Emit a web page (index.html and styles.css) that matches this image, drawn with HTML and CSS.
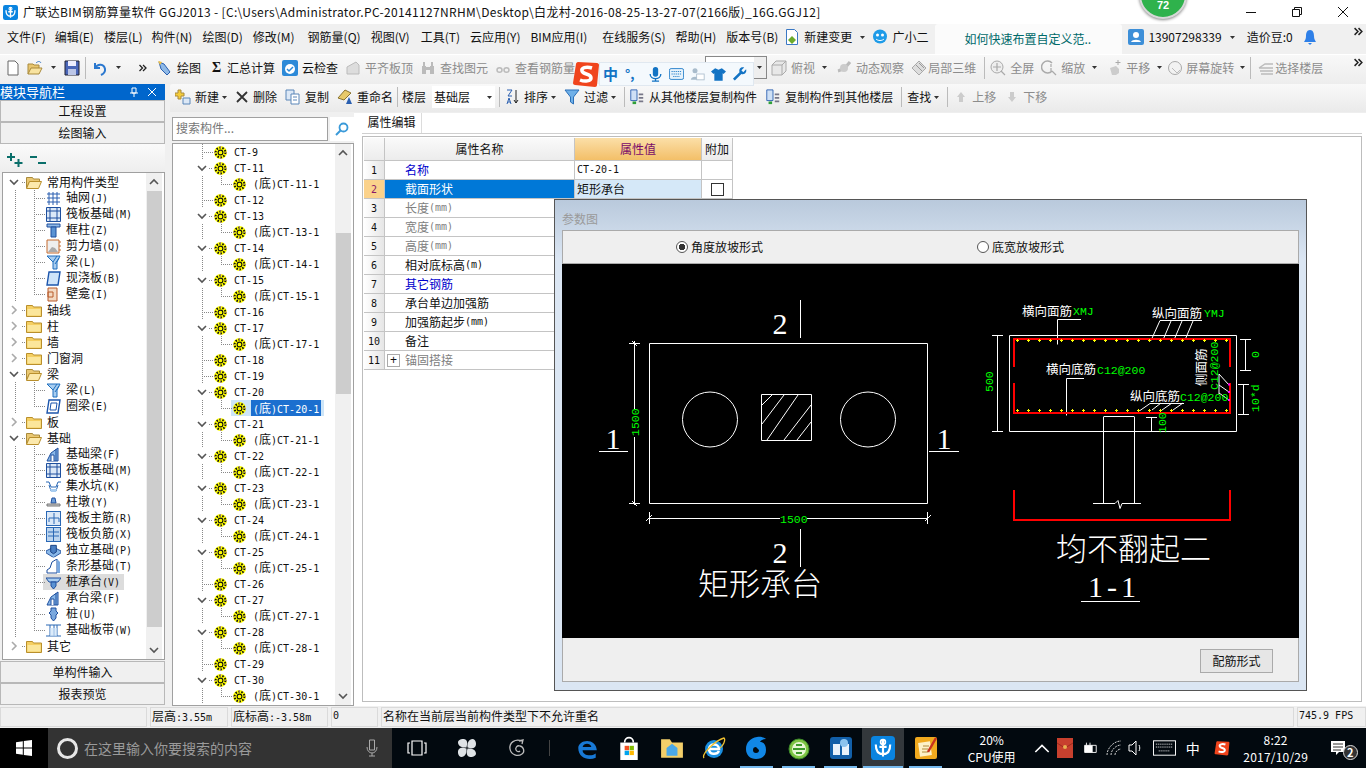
FILE: index.html
```html
<!DOCTYPE html>
<html lang="zh"><head><meta charset="utf-8"><title>广联达BIM钢筋算量软件</title><link rel="stylesheet" href="styles.css"></head>
<body>
<svg class="defs" xmlns="http://www.w3.org/2000/svg">
<symbol id="chevd" viewBox="0 0 10 10"><path d="M1 3l4 4 4-4" fill="none" stroke="#555" stroke-width="1.600"/></symbol>
<symbol id="chevu" viewBox="0 0 10 10"><path d="M1 7l4-4 4 4" fill="none" stroke="#555" stroke-width="1.600"/></symbol>
<symbol id="chevr" viewBox="0 0 10 10"><path d="M3 1l4 4-4 4" fill="none" stroke="#aaa" stroke-width="1.600"/></symbol>
<symbol id="folder" viewBox="0 0 16 14"><path d="M.5 2.500h6l1 1.500h8v9.500h-15z" fill="#f5cf62" stroke="#b98f2c"/><path d="M1.500 6h13v6.500h-13z" fill="#fbe69b"/></symbol>
<symbol id="fopen" viewBox="0 0 16 14"><path d="M.5 2.500h6l1 1.500h6v3h-10l-3 6z" fill="#eac873" stroke="#a98a3c"/><path d="M3.500 6.500h12l-3 7h-12z" fill="#fce9ad" stroke="#b98f2c"/></symbol>
<symbol id="ct" viewBox="0 0 12 12"><circle cx="6" cy="6" r="6" fill="#ff0"/><circle cx="6" cy="6" r="4.500" fill="none" stroke="#111" stroke-width="1.800" stroke-dasharray="1.400 1.400"/><circle cx="6" cy="6" r="2.200" fill="#ff0" stroke="#111"/><path d="M0 6h1.500M10.500 6H12M6 0v1.500M6 10.500V12" stroke="#a88" stroke-width="1"/></symbol>
<symbol id="grid" viewBox="0 0 15 15"><path d="M1 3h13M1 7h13M1 11h13M3 1v13M7 1v13M11 1v13" stroke="#2a5fb0" fill="none"/></symbol>
<symbol id="raft" viewBox="0 0 15 15"><path d="M.5.500h14v14H.5zM4 .500v14M11 .500v14M.5 4h14M.5 11h14" stroke="#1e4f9e" fill="#dbe8f7"/></symbol>
<symbol id="col" viewBox="0 0 15 15"><path d="M1 1h13v3H1z" fill="#8fb9e6" stroke="#1e4f9e"/><path d="M5 4h5v10H5z" fill="#5b93d3" stroke="#1e4f9e"/></symbol>
<symbol id="wall" viewBox="0 0 15 15"><path d="M1 1h12v13H1z" fill="#eee" stroke="#c46a2e"/><path d="M2 13l4-5 3 1 3 4z" fill="#aaa"/><path d="M13 3h2M13 7h2M13 11h2" stroke="#c46a2e"/></symbol>
<symbol id="beam" viewBox="0 0 15 15"><path d="M1 1h13l-3 6v7H7V7z" fill="#a8cdf0" stroke="#1e6fbe"/><path d="M7 7l4-6M9 9l4-6" stroke="#1e6fbe"/></symbol>
<symbol id="slab" viewBox="0 0 15 15"><path d="M3 1h11l-2 13H1z" fill="#cfe4f9" stroke="#1c55ac" stroke-width="1.400"/></symbol>
<symbol id="ring" viewBox="0 0 15 15"><path d="M3 1h11l-2 13H1z" fill="#fff" stroke="#1c55ac" stroke-width="1.400"/><path d="M5 4h6l-1 7H4z" fill="none" stroke="#1c55ac"/></symbol>
<symbol id="niche" viewBox="0 0 15 15"><path d="M2 1h9v13H2zM2 5h5v5H2z" fill="#f3d9c2" stroke="#b85a2a"/></symbol>
<symbol id="fbeam" viewBox="0 0 15 15"><path d="M1 14l4-8 7-5v13z" fill="#8ab8e8" stroke="#1e4f9e"/><path d="M5 14V8h3v6" fill="#fff" stroke="#1e4f9e"/><path d="M10 2v12" stroke="#1e4f9e"/></symbol>
<symbol id="sump" viewBox="0 0 15 15"><path d="M0 3h3l2 5h5l2-5h3M3 6l2 6h5l2-6" fill="none" stroke="#2a68b5"/><path d="M4 10h7l-1 3H5z" fill="#a8cdf0"/></symbol>
<symbol id="pier" viewBox="0 0 15 15"><path d="M6 3h3l1 5H5z" fill="#6f9fd8" stroke="#1e4f9e"/><path d="M1 9h13v2H1z" fill="#ccc" stroke="#777"/></symbol>
<symbol id="rmain" viewBox="0 0 15 15"><rect x=".5" y=".5" width="14" height="14" fill="#dbe8f7" stroke="#2a68b5"/><path d="M8 2v11M3 7h10M3 7v4M13 7v4" stroke="#2a68b5" fill="none"/></symbol>
<symbol id="rneg" viewBox="0 0 15 15"><rect x=".5" y=".5" width="14" height="14" fill="#bcd5ef" stroke="#2a68b5"/><path d="M7.500 1v13M2 5h11M2 9h11" stroke="#2a68b5"/></symbol>
<symbol id="iso" viewBox="0 0 16 15"><path d="M0 8l8-4 8 4v2l-8 5-8-5z" fill="#8ab8e8" stroke="#1e4f9e"/><path d="M5 2h6v7l-3 2-3-2z" fill="#4b80c4" stroke="#173f80"/></symbol>
<symbol id="strip" viewBox="0 0 15 15"><path d="M1 14V11l3-2 2-6 5-3v14z" fill="#fff" stroke="#1e4f9e"/><path d="M11 0l3 3v11h-3z" fill="#7aa8de"/></symbol>
<symbol id="cap" viewBox="0 0 15 15"><path d="M0 3h15l-3 4H3z" fill="#a8cdf0" stroke="#1e4f9e"/><path d="M5 7h5v4l-2.500 3L5 11z" fill="#5b93d3" stroke="#1e4f9e"/></symbol>
<symbol id="pile" viewBox="0 0 15 15"><path d="M5 1h5v3l2 2-2 2v3l-2.500 3L5 11V8L3 6l2-2z" fill="#7aa8de" stroke="#1e4f9e"/></symbol>
<symbol id="band" viewBox="0 0 15 15"><path d="M0 2h15M0 13h15M4 2v11M8 2v11M11 2v11" stroke="#2a68b5"/><path d="M4 5h7v8H4z" fill="#cfe4f9" opacity=".7"/></symbol>
<symbol id="drop" viewBox="0 0 5 3"><path d="M0 0h5L2.500 3z" fill="#333"/></symbol>
<symbol id="more" viewBox="0 0 8 8"><path d="M.5 1l3 3-3 3M4 1l3 3-3 3" fill="none" stroke="#222" stroke-width="1.300"/></symbol>
<symbol id="cube" viewBox="0 0 16 16"><path d="M1 5l4-4h10v10l-4 4H1zM1 5h10v10M11 5l4-4" fill="#e8e8e8" stroke="#aaa"/></symbol>
<symbol id="orbit" viewBox="0 0 16 16"><path d="M2 11c4-1 9-5 12-9" stroke="#bbb" stroke-width="3" fill="none"/><circle cx="8" cy="8" r="4" fill="#ccc"/></symbol>
<symbol id="local" viewBox="0 0 16 16"><path d="M8 1l7 7-7 7-7-7z" fill="#ddd" stroke="#aaa"/><path d="M5 5l6 6M8 3l5 5" stroke="#999"/></symbol>
<symbol id="zoomf" viewBox="0 0 16 16"><circle cx="7" cy="7" r="6" fill="#eee" stroke="#aaa"/><path d="M7 3v8M3 7h8M11 11l4 4" stroke="#aaa" stroke-width="1.200"/></symbol>
<symbol id="zooma" viewBox="0 0 16 16"><path d="M11 3a6 6 0 1 0 0 8" fill="none" stroke="#aaa" stroke-width="1.500"/><path d="M10 4v3M10 8v3M11 11l4 4" stroke="#aaa" stroke-width="1.200"/></symbol>
<symbol id="pan" viewBox="0 0 16 16"><path d="M4 8l6-2 3 3v4l-3 2H6z" fill="#ccc"/><path d="M12 0v5M9.500 2.500h5" stroke="#aaa"/></symbol>
<symbol id="rot" viewBox="0 0 16 16"><circle cx="8" cy="8" r="6.500" fill="#f2f2f2" stroke="#aaa"/><path d="M5 8l5 5 3-3" stroke="#bbb" fill="none"/></symbol>
<symbol id="layers" viewBox="0 0 16 16"><path d="M1 8l6-4h8M1 8h14M2 11h13M3 14h12" stroke="#bbb" fill="none" stroke-width="1.300"/></symbol>
<symbol id="sheets" viewBox="0 0 16 18"><path d="M1 1h7v12H1z" fill="#cfe0f5" stroke="#2a5fb0"/><path d="M3 14h4v3H3z" fill="#2fa03a"/><path d="M10 5h5v2h-5zM10 9h5v2h-5zM10 13h5v2h-5z" fill="#778"/></symbol>
<symbol id="win" viewBox="0 0 16 16"><path d="M0 2.200l6.800-1v6.400H0zM7.800 1l8.200-1v7.600H7.800zM0 8.600h6.800v6.200L0 13.800zM7.800 8.600H16V16l-8.200-1.100z" fill="#fff"/></symbol>
<symbol id="anchor" viewBox="0 0 20 20"><rect width="20" height="20" rx="3" fill="#0a84e0"/><path d="M10 3v14M7 9h6M4 7c0 6 3 8 6 8s6-2 6-8" stroke="#fff" stroke-width="1.800" fill="none"/><circle cx="10" cy="5" r="2" fill="none" stroke="#fff" stroke-width="1.400"/></symbol>
<symbol id="slogo" viewBox="0 0 28 28"><path d="M6 2l19 1c1 0 2 1 2 2l-2 20c0 1-1 2-2 2L3 25c-1 0-2-1-2-2L4 4c0-1 1-2 2-2z" fill="#f0441c"/><path d="M20 8c-6-2-11 0-10 3 1 4 9 2 9 7 0 3-6 4-11 2" fill="none" stroke="#fff" stroke-width="3.500"/></symbol>
</svg>

<div class="app">
<header class="titlebar">
<svg class="appicon" viewBox="0 0 20 20"><use href="#anchor"/></svg>
<span class="title">广联达BIM钢筋算量软件 GGJ2013 - [C:\Users\Administrator.PC-20141127NRHM\Desktop\白龙村-2016-08-25-13-27-07(2166版)_16G.GGJ12]</span>
<span class="winbtn"><svg viewBox="0 0 12 12"><path d="M1 6.500h10" stroke="#111"/></svg></span>
<span class="winbtn"><svg viewBox="0 0 12 12"><path d="M1.500 3.500h7v7h-7zM3.500 3.500v-2h7v7h-2" fill="none" stroke="#111"/></svg></span>
<span class="winbtn"><svg viewBox="0 0 12 12"><path d="M1 1l10 10M11 1L1 11" stroke="#111"/></svg></span>
</header>

<nav class="menubar">
<span>文件(F)</span><span class="mtight">编辑(E)</span><span>楼层(L)</span><span class="mtight">构件(N)</span><span>绘图(D)</span><span class="mfix">修改(M)</span><span>钢筋量(Q)</span><span class="mone">视图(V)</span><span>工具(T)</span><span>云应用(Y)</span><span class="mbim">BIM应用(I)</span><span>在线服务(S)</span><span>帮助(H)</span><span>版本号(B)</span>
<span class="tool mnew"><svg class="i16" viewBox="0 0 16 16"><path d="M2.500.5h8l3 3v12h-11z" fill="#fff" stroke="#3a78c4"/><path d="M8 7l4 4-4 4-4-4z" fill="#6cab2c"/></svg>新建变更<svg class="dd" viewBox="0 0 5 3"><use href="#drop"/></svg></span>
<span class="tool tight"><svg class="i16" viewBox="0 0 16 16"><circle cx="8" cy="7.500" r="7" fill="#1e9be8"/><circle cx="5.500" cy="6" r="1.500" fill="#fff"/><circle cx="10.500" cy="6" r="1.500" fill="#fff"/><path d="M4 10c2 2 6 2 8 0" stroke="#fff" fill="none"/></svg>广小二</span>
<span class="news">如何快速布置自定义范..</span>
<span class="tool user"><svg class="i16" viewBox="0 0 16 16"><rect width="16" height="16" rx="2" fill="#3d8fd8"/><circle cx="8" cy="6" r="3" fill="#fff"/><path d="M3 13c1-3 9-3 10 0z" fill="#fff"/></svg>13907298339<svg class="dd" viewBox="0 0 5 3"><use href="#drop"/></svg></span>
<span class="tool beans">造价豆:0<svg class="i16" viewBox="0 0 16 16"><path d="M8 1c-3 0-4 3-4 6s-1 4-2 6h12c-1-2-2-3-2-6s-1-6-4-6z" fill="#2f80e8"/><path d="M6 14h4l-2 2z" fill="#2f80e8"/></svg></span>
<svg class="more" viewBox="0 0 8 8"><use href="#more"/></svg>
</nav>

<div class="toolbar">
<svg class="i16 m6" viewBox="0 0 16 16"><path d="M3 1h7l3 3v11H3z" fill="#fff" stroke="#666"/></svg>
<svg class="i16 m8" viewBox="0 0 16 16"><path d="M1 14V4h5l1 1h5v3" fill="#e8c670" stroke="#a98a3c"/><path d="M1 14l3-6h11l-3 6z" fill="#f8e3a0" stroke="#a98a3c"/><path d="M9 3c2-2 4-2 5 0" stroke="#3a78c4" fill="none"/></svg>
<svg class="dd" viewBox="0 0 5 3"><use href="#drop"/></svg>
<svg class="i16" viewBox="0 0 16 16"><path d="M1 1h14v14H1z" fill="#4a66b8" stroke="#223"/><path d="M4 1h8v5H4z" fill="#eef"/><path d="M4 9h8v6H4z" fill="#bcc6e6"/></svg>
<i class="sep"></i>
<svg class="i16 m8 undo" viewBox="0 0 16 16"><path d="M3 3v5h5M3 8c3-5 9-4 10 1 .5 3-2 5-4 6" fill="none" stroke="#2b78cf" stroke-width="2"/></svg>
<svg class="dd" viewBox="0 0 5 3"><use href="#drop"/></svg>
<svg class="more gap" viewBox="0 0 8 8"><use href="#more"/></svg>
<span class="tbi first"><svg class="i16" viewBox="0 0 16 16"><path d="M2 2l5 2 6 8-3 3-6-6z" fill="#8fb9e6" stroke="#2a5fb0"/><path d="M1 1l4 1-2 3z" fill="#f2c040"/></svg>绘图</span>
<span class="tbi m9"><b class="sigma">Σ</b>汇总计算</span>
<span class="tbi"><svg class="i16" viewBox="0 0 16 16"><rect width="16" height="16" rx="2" fill="#2d8ad8"/><circle cx="8" cy="9" r="5" fill="#fff"/><path d="M5 9l2 2 4-4" stroke="#2d8ad8" fill="none" stroke-width="1.500"/></svg>云检查</span>
<span class="tbi off"><svg class="i16" viewBox="0 0 16 16"><path d="M2 14V7l9-5 3 3v9z" fill="#ddd" stroke="#bbb"/></svg>平齐板顶</span>
<span class="tbi off"><svg class="i16" viewBox="0 0 16 16"><path d="M2 6h4v8H2zM10 6h4v8h-4zM3 2h2v4H3zM11 2h2v4h-2zM6 7h4v3H6z" fill="#bbb"/></svg>查找图元</span>
<span class="tbi off"><svg class="i16" viewBox="0 0 16 16"><path d="M2 10c0-3 5-3 5 0s-5 3-5 0zM9 10c0-3 5-3 5 0s-5 3-5 0z" fill="none" stroke="#bbb" stroke-width="1.500"/></svg>查看钢筋量</span>
<span class="combo"><svg class="dd" viewBox="0 0 5 3"><use href="#drop"/></svg></span>
<span class="tbi off m4"><svg class="i16" viewBox="0 0 16 16"><use href="#cube"/></svg>俯视<svg class="dd" viewBox="0 0 5 3"><use href="#drop"/></svg></span>
<span class="tbi off m9"><svg class="i16" viewBox="0 0 16 16"><use href="#orbit"/></svg>动态观察</span>
<span class="tbi off snug"><svg class="i16" viewBox="0 0 16 16"><use href="#local"/></svg>局部三维</span>
<i class="sep"></i>
<span class="tbi off m0"><svg class="i16" viewBox="0 0 16 16"><use href="#zoomf"/></svg>全屏</span>
<span class="tbi off"><svg class="i16" viewBox="0 0 16 16"><use href="#zooma"/></svg>缩放<svg class="dd" viewBox="0 0 5 3"><use href="#drop"/></svg></span>
<span class="tbi off m9"><svg class="i16" viewBox="0 0 16 16"><use href="#pan"/></svg>平移<svg class="dd" viewBox="0 0 5 3"><use href="#drop"/></svg></span>
<span class="tbi off m6b"><svg class="i16" viewBox="0 0 16 16"><use href="#rot"/></svg>屏幕旋转<svg class="dd" viewBox="0 0 5 3"><use href="#drop"/></svg></span>
<i class="sep"></i>
<span class="tbi off m2"><svg class="i16" viewBox="0 0 16 16"><use href="#layers"/></svg>选择楼层</span>
<svg class="more" viewBox="0 0 8 8"><use href="#more"/></svg>
</div>

<main class="main">
<aside class="nav">
<div class="navhead"><span>模块导航栏</span><svg class="pin" viewBox="0 0 10 10"><path d="M3 1h4v5H3zM1 6h8M5 6v4" fill="none" stroke="#fff"/></svg><svg class="pin" viewBox="0 0 10 10"><path d="M1 1l8 8M9 1L1 9" stroke="#fff"/></svg></div>
<div class="navbtn">工程设置</div>
<div class="navbtn">绘图输入</div>
<div class="navtools"><svg viewBox="0 0 16 14"><path d="M4 0v8M0 4h8M11.500 6v8M7.500 10h8" stroke="#0a6f6a" stroke-width="2" fill="none"/></svg><svg viewBox="0 0 16 14"><path d="M0 4h7M8 10h8" stroke="#0a6f6a" stroke-width="2" fill="none"/></svg></div>
<div class="pane navtree">
<div class="list">
<div class="row grp"><svg class="chev" viewBox="0 0 10 10"><use href="#chevd"/></svg><svg class="fold" viewBox="0 0 16 14"><use href="#fopen"/></svg><span class="lb">常用构件类型</span></div>
<div class="row kid"><svg class="ico" viewBox="0 0 15 15"><use href="#grid"/></svg><span class="lat"><i>轴网</i>(J)</span></div>
<div class="row kid"><svg class="ico" viewBox="0 0 15 15"><use href="#raft"/></svg><span class="lat"><i>筏板基础</i>(M)</span></div>
<div class="row kid"><svg class="ico" viewBox="0 0 15 15"><use href="#col"/></svg><span class="lat"><i>框柱</i>(Z)</span></div>
<div class="row kid"><svg class="ico" viewBox="0 0 15 15"><use href="#wall"/></svg><span class="lat"><i>剪力墙</i>(Q)</span></div>
<div class="row kid"><svg class="ico" viewBox="0 0 15 15"><use href="#beam"/></svg><span class="lat"><i>梁</i>(L)</span></div>
<div class="row kid"><svg class="ico" viewBox="0 0 15 15"><use href="#slab"/></svg><span class="lat"><i>现浇板</i>(B)</span></div>
<div class="row kid end"><svg class="ico" viewBox="0 0 15 15"><use href="#niche"/></svg><span class="lat"><i>壁龛</i>(I)</span></div>
<div class="row grp"><svg class="chev" viewBox="0 0 10 10"><use href="#chevr"/></svg><svg class="fold" viewBox="0 0 16 14"><use href="#folder"/></svg><span class="lb">轴线</span></div>
<div class="row grp"><svg class="chev" viewBox="0 0 10 10"><use href="#chevr"/></svg><svg class="fold" viewBox="0 0 16 14"><use href="#folder"/></svg><span class="lb">柱</span></div>
<div class="row grp"><svg class="chev" viewBox="0 0 10 10"><use href="#chevr"/></svg><svg class="fold" viewBox="0 0 16 14"><use href="#folder"/></svg><span class="lb">墙</span></div>
<div class="row grp"><svg class="chev" viewBox="0 0 10 10"><use href="#chevr"/></svg><svg class="fold" viewBox="0 0 16 14"><use href="#folder"/></svg><span class="lb">门窗洞</span></div>
<div class="row grp"><svg class="chev" viewBox="0 0 10 10"><use href="#chevd"/></svg><svg class="fold" viewBox="0 0 16 14"><use href="#fopen"/></svg><span class="lb">梁</span></div>
<div class="row kid"><svg class="ico" viewBox="0 0 15 15"><use href="#beam"/></svg><span class="lat"><i>梁</i>(L)</span></div>
<div class="row kid end"><svg class="ico" viewBox="0 0 15 15"><use href="#ring"/></svg><span class="lat"><i>圈梁</i>(E)</span></div>
<div class="row grp"><svg class="chev" viewBox="0 0 10 10"><use href="#chevr"/></svg><svg class="fold" viewBox="0 0 16 14"><use href="#folder"/></svg><span class="lb">板</span></div>
<div class="row grp"><svg class="chev" viewBox="0 0 10 10"><use href="#chevd"/></svg><svg class="fold" viewBox="0 0 16 14"><use href="#fopen"/></svg><span class="lb">基础</span></div>
<div class="row kid"><svg class="ico" viewBox="0 0 15 15"><use href="#fbeam"/></svg><span class="lat"><i>基础梁</i>(F)</span></div>
<div class="row kid"><svg class="ico" viewBox="0 0 15 15"><use href="#raft"/></svg><span class="lat"><i>筏板基础</i>(M)</span></div>
<div class="row kid"><svg class="ico" viewBox="0 0 15 15"><use href="#sump"/></svg><span class="lat"><i>集水坑</i>(K)</span></div>
<div class="row kid"><svg class="ico" viewBox="0 0 15 15"><use href="#pier"/></svg><span class="lat"><i>柱墩</i>(Y)</span></div>
<div class="row kid"><svg class="ico" viewBox="0 0 15 15"><use href="#rmain"/></svg><span class="lat"><i>筏板主筋</i>(R)</span></div>
<div class="row kid"><svg class="ico" viewBox="0 0 15 15"><use href="#rneg"/></svg><span class="lat"><i>筏板负筋</i>(X)</span></div>
<div class="row kid"><svg class="ico" viewBox="0 0 16 15"><use href="#iso"/></svg><span class="lat"><i>独立基础</i>(P)</span></div>
<div class="row kid"><svg class="ico" viewBox="0 0 15 15"><use href="#strip"/></svg><span class="lat"><i>条形基础</i>(T)</span></div>
<div class="row kid hot"><svg class="ico" viewBox="0 0 15 15"><use href="#cap"/></svg><span class="lat"><i>桩承台</i>(V)</span></div>
<div class="row kid"><svg class="ico" viewBox="0 0 15 15"><use href="#fbeam"/></svg><span class="lat"><i>承台梁</i>(F)</span></div>
<div class="row kid"><svg class="ico" viewBox="0 0 15 15"><use href="#pile"/></svg><span class="lat"><i>桩</i>(U)</span></div>
<div class="row kid end"><svg class="ico" viewBox="0 0 15 15"><use href="#band"/></svg><span class="lat"><i>基础板带</i>(W)</span></div>
<div class="row grp"><svg class="chev" viewBox="0 0 10 10"><use href="#chevr"/></svg><svg class="fold" viewBox="0 0 16 14"><use href="#folder"/></svg><span class="lb">其它</span></div>
</div>
<div class="sbar nsb"><svg class="sbtn" viewBox="0 0 10 10"><use href="#chevu"/></svg><span class="thumb"></span><svg class="sbtn" viewBox="0 0 10 10"><use href="#chevd"/></svg></div>
</div>
<div class="navbtn btm">单构件输入</div>
<div class="navbtn">报表预览</div>
</aside>

<section class="content">
<div class="toolbar2">
<span class="tbi s175"><svg class="i16" viewBox="0 0 16 16"><path d="M3 1h3v3h3v3H6v3H3V7H0V4h3z" fill="#f4cc3a" stroke="#a98a3c"/><path d="M8 9h7v6H8z" fill="#dce8f6" stroke="#5a86b8"/></svg>新建<svg class="dd" viewBox="0 0 5 3"><use href="#drop"/></svg></span>
<span class="tbi m9"><svg class="i12" viewBox="0 0 12 12"><path d="M1 1l10 10M11 1L1 11" stroke="#333" stroke-width="1.800"/></svg>删除</span>
<span class="tbi"><svg class="i16" viewBox="0 0 16 16"><path d="M1 1h8v10H1z" fill="#dce8f6" stroke="#5a86b8"/><path d="M6 5h8v10H6z" fill="#fff" stroke="#5a86b8"/><path d="M8 8h4M8 11h4" stroke="#5a86b8"/></svg>复制</span>
<span class="tbi"><svg class="i16" viewBox="0 0 16 16"><path d="M1 9l7-8 6 3-7 7z" fill="#e8c96a" stroke="#8a7330"/><path d="M9 15l3-7 3 7z" fill="#2a5fb0"/></svg>重命名</span>
<i class="sep"></i>
<span class="plain">楼层</span>
<span class="floor">基础层<svg class="dd" viewBox="0 0 5 3"><use href="#drop"/></svg></span>
<i class="sep"></i>
<span class="tbi m0"><svg class="i16" viewBox="0 0 16 16"><path d="M3 1h5L4 7h4M3 15l2-6 2 6M4 13h2" fill="none" stroke="#2a5fb0"/><path d="M12 1v13M10 11l2 3 2-3" fill="none" stroke="#222"/></svg>排序<svg class="dd" viewBox="0 0 5 3"><use href="#drop"/></svg></span>
<span class="tbi"><svg class="i16" viewBox="0 0 16 16"><path d="M1 1h14L9.500 8v7l-3-2V8z" fill="#6fb0e8" stroke="#2a6fb8"/></svg>过滤<svg class="dd" viewBox="0 0 5 3"><use href="#drop"/></svg></span>
<i class="sep sw"></i>
<span class="tbi m0"><svg class="i16" viewBox="0 0 16 18"><use href="#sheets"/></svg>从其他楼层复制构件</span>
<span class="tbi"><svg class="i16" viewBox="0 0 16 18"><use href="#sheets"/></svg>复制构件到其他楼层</span>
<i class="sep sw"></i>
<span class="tbi m1">查找<svg class="dd" viewBox="0 0 5 3"><use href="#drop"/></svg></span>
<i class="sep sw"></i>
<span class="tbi off wide m3"><svg class="i12" viewBox="0 0 12 12"><path d="M6 1l4 5H8v5H4V6H2z" fill="#ccc"/></svg>上移</span>
<span class="tbi off wide"><svg class="i12" viewBox="0 0 12 12"><path d="M6 11l4-5H8V1H4v5H2z" fill="#ccc"/></svg>下移</span>
</div>
<div class="body">
<div class="left">
<div class="search"><span class="sinput">搜索构件...</span><span class="sbutton"><svg viewBox="0 0 14 14"><circle cx="8.500" cy="5.500" r="4" fill="none" stroke="#3a9ad9" stroke-width="1.800"/><path d="M5.500 8.500L1 13" stroke="#3a9ad9" stroke-width="2"/></svg></span></div>
<div class="pane comptree">
<div class="list">
<div class="row leaf"><svg class="cti" viewBox="0 0 12 12"><use href="#ct"/></svg><span class="lat">CT-9</span></div>
<div class="row par"><svg class="chev" viewBox="0 0 10 10"><use href="#chevd"/></svg><svg class="cti" viewBox="0 0 12 12"><use href="#ct"/></svg><span class="lat">CT-11</span></div>
<div class="row sub"><svg class="cti" viewBox="0 0 12 12"><use href="#ct"/></svg><span class="lat">(<i>底</i>)CT-11-1</span></div>
<div class="row leaf"><svg class="cti" viewBox="0 0 12 12"><use href="#ct"/></svg><span class="lat">CT-12</span></div>
<div class="row par"><svg class="chev" viewBox="0 0 10 10"><use href="#chevd"/></svg><svg class="cti" viewBox="0 0 12 12"><use href="#ct"/></svg><span class="lat">CT-13</span></div>
<div class="row sub"><svg class="cti" viewBox="0 0 12 12"><use href="#ct"/></svg><span class="lat">(<i>底</i>)CT-13-1</span></div>
<div class="row par"><svg class="chev" viewBox="0 0 10 10"><use href="#chevd"/></svg><svg class="cti" viewBox="0 0 12 12"><use href="#ct"/></svg><span class="lat">CT-14</span></div>
<div class="row sub"><svg class="cti" viewBox="0 0 12 12"><use href="#ct"/></svg><span class="lat">(<i>底</i>)CT-14-1</span></div>
<div class="row par"><svg class="chev" viewBox="0 0 10 10"><use href="#chevd"/></svg><svg class="cti" viewBox="0 0 12 12"><use href="#ct"/></svg><span class="lat">CT-15</span></div>
<div class="row sub"><svg class="cti" viewBox="0 0 12 12"><use href="#ct"/></svg><span class="lat">(<i>底</i>)CT-15-1</span></div>
<div class="row leaf"><svg class="cti" viewBox="0 0 12 12"><use href="#ct"/></svg><span class="lat">CT-16</span></div>
<div class="row par"><svg class="chev" viewBox="0 0 10 10"><use href="#chevd"/></svg><svg class="cti" viewBox="0 0 12 12"><use href="#ct"/></svg><span class="lat">CT-17</span></div>
<div class="row sub"><svg class="cti" viewBox="0 0 12 12"><use href="#ct"/></svg><span class="lat">(<i>底</i>)CT-17-1</span></div>
<div class="row leaf"><svg class="cti" viewBox="0 0 12 12"><use href="#ct"/></svg><span class="lat">CT-18</span></div>
<div class="row leaf"><svg class="cti" viewBox="0 0 12 12"><use href="#ct"/></svg><span class="lat">CT-19</span></div>
<div class="row par"><svg class="chev" viewBox="0 0 10 10"><use href="#chevd"/></svg><svg class="cti" viewBox="0 0 12 12"><use href="#ct"/></svg><span class="lat">CT-20</span></div>
<div class="row sub sel"><svg class="cti" viewBox="0 0 12 12"><use href="#ct"/></svg><span class="lat">(<i>底</i>)CT-20-1</span></div>
<div class="row par"><svg class="chev" viewBox="0 0 10 10"><use href="#chevd"/></svg><svg class="cti" viewBox="0 0 12 12"><use href="#ct"/></svg><span class="lat">CT-21</span></div>
<div class="row sub"><svg class="cti" viewBox="0 0 12 12"><use href="#ct"/></svg><span class="lat">(<i>底</i>)CT-21-1</span></div>
<div class="row par"><svg class="chev" viewBox="0 0 10 10"><use href="#chevd"/></svg><svg class="cti" viewBox="0 0 12 12"><use href="#ct"/></svg><span class="lat">CT-22</span></div>
<div class="row sub"><svg class="cti" viewBox="0 0 12 12"><use href="#ct"/></svg><span class="lat">(<i>底</i>)CT-22-1</span></div>
<div class="row par"><svg class="chev" viewBox="0 0 10 10"><use href="#chevd"/></svg><svg class="cti" viewBox="0 0 12 12"><use href="#ct"/></svg><span class="lat">CT-23</span></div>
<div class="row sub"><svg class="cti" viewBox="0 0 12 12"><use href="#ct"/></svg><span class="lat">(<i>底</i>)CT-23-1</span></div>
<div class="row par"><svg class="chev" viewBox="0 0 10 10"><use href="#chevd"/></svg><svg class="cti" viewBox="0 0 12 12"><use href="#ct"/></svg><span class="lat">CT-24</span></div>
<div class="row sub"><svg class="cti" viewBox="0 0 12 12"><use href="#ct"/></svg><span class="lat">(<i>底</i>)CT-24-1</span></div>
<div class="row par"><svg class="chev" viewBox="0 0 10 10"><use href="#chevd"/></svg><svg class="cti" viewBox="0 0 12 12"><use href="#ct"/></svg><span class="lat">CT-25</span></div>
<div class="row sub"><svg class="cti" viewBox="0 0 12 12"><use href="#ct"/></svg><span class="lat">(<i>底</i>)CT-25-1</span></div>
<div class="row leaf"><svg class="cti" viewBox="0 0 12 12"><use href="#ct"/></svg><span class="lat">CT-26</span></div>
<div class="row par"><svg class="chev" viewBox="0 0 10 10"><use href="#chevd"/></svg><svg class="cti" viewBox="0 0 12 12"><use href="#ct"/></svg><span class="lat">CT-27</span></div>
<div class="row sub"><svg class="cti" viewBox="0 0 12 12"><use href="#ct"/></svg><span class="lat">(<i>底</i>)CT-27-1</span></div>
<div class="row par"><svg class="chev" viewBox="0 0 10 10"><use href="#chevd"/></svg><svg class="cti" viewBox="0 0 12 12"><use href="#ct"/></svg><span class="lat">CT-28</span></div>
<div class="row sub"><svg class="cti" viewBox="0 0 12 12"><use href="#ct"/></svg><span class="lat">(<i>底</i>)CT-28-1</span></div>
<div class="row leaf"><svg class="cti" viewBox="0 0 12 12"><use href="#ct"/></svg><span class="lat">CT-29</span></div>
<div class="row par"><svg class="chev" viewBox="0 0 10 10"><use href="#chevd"/></svg><svg class="cti" viewBox="0 0 12 12"><use href="#ct"/></svg><span class="lat">CT-30</span></div>
<div class="row sub"><svg class="cti" viewBox="0 0 12 12"><use href="#ct"/></svg><span class="lat">(<i>底</i>)CT-30-1</span></div>
</div>
<div class="sbar csb"><svg class="sbtn" viewBox="0 0 10 10"><use href="#chevu"/></svg><span class="thumb"></span><svg class="sbtn" viewBox="0 0 10 10"><use href="#chevd"/></svg></div>
</div>
</div>
<div class="right">
<div class="tabs"><span class="tab">属性编辑</span></div>
<div class="props">
<div class="grid">
<div class="hd"></div><div class="hd">属性名称</div><div class="hd val">属性值</div><div class="hd">附加</div>
<div class="no">1</div><div class="nm link">名称</div><div class="vl lat">CT-20-1</div><div class="ex"></div>
<div class="no on">2</div><div class="nm on">截面形状</div><div class="vl on">矩形承台</div><div class="ex"><b class="chk"></b></div>
<div class="no">3</div><div class="nm dim lat"><i>长度</i>(mm)</div><div class="vl"></div><div class="ex"></div>
<div class="no">4</div><div class="nm dim lat"><i>宽度</i>(mm)</div><div class="vl"></div><div class="ex"></div>
<div class="no">5</div><div class="nm dim lat"><i>高度</i>(mm)</div><div class="vl"></div><div class="ex"></div>
<div class="no">6</div><div class="nm lat"><i>相对底标高</i>(m)</div><div class="vl"></div><div class="ex"></div>
<div class="no">7</div><div class="nm link">其它钢筋</div><div class="vl"></div><div class="ex"></div>
<div class="no">8</div><div class="nm">承台单边加强筋</div><div class="vl"></div><div class="ex"></div>
<div class="no">9</div><div class="nm lat"><i>加强筋起步</i>(mm)</div><div class="vl"></div><div class="ex"></div>
<div class="no">10</div><div class="nm">备注</div><div class="vl"></div><div class="ex"></div>
<div class="no">11</div><div class="nm dim plus"><b class="pb">+</b>锚固搭接</div><div class="vl"></div><div class="ex"></div>
</div>
</div>
</div>
</div>
</section>
</main>

<footer class="status">
<span class="s1"></span><span class="s2 lat"><i>层高</i>:3.55m</span><span class="s3 lat"><i>底标高</i>:-3.58m</span><span class="s4 lat">0</span><span class="s5">名称在当前层当前构件类型下不允许重名</span><span class="s6 lat">745.9 FPS</span>
</footer>

<div class="taskbar">
<span class="start"><svg viewBox="0 0 16 16"><use href="#win"/></svg></span>
<span class="cortana"><b class="cring"></b><span class="ph">在这里输入你要搜索的内容</span><svg class="mic" viewBox="0 0 12 18"><path d="M3.500 1h5v10h-5zM1 8c0 8 10 8 10 0M6 14v3M3 17h6" fill="none" stroke="#aaa"/></svg></span>
<span class="slot"><svg viewBox="0 0 20 16"><path d="M5 1h10v14H5zM3 3H1v10h2M17 3h2v10h-2" fill="none" stroke="#fff" stroke-width="1.200"/></svg></span>
<span class="slot"><svg viewBox="0 0 20 20"><path d="M9.500 9.500C5 10 1 8 1 4.500 1 1 7 0 9 2c2 2 1 5 .5 7.500zM10.500 9.500C10 5 12 1 15.500 1 19 1 20 7 18 9c-2 2-5 1-7.500.5zM9.500 10.500C10 15 8 19 4.500 19 1 19 0 13 2 11c2-2 5-1 7.500-.5zM10.500 10.500C15 10 19 12 19 15.500 19 19 13 20 11 18c-2-2-1-5-.5-7.500z" fill="#dfe3e6"/></svg></span>
<span class="slot"><svg viewBox="0 0 20 20"><path d="M15 3C8 0 2 5 3 11c1 6 8 8 12 5 3-2 2-7-2-8-3-1-5 2-4 4s3 2 4 1M12 3l4-1-1 4" fill="none" stroke="#bbb" stroke-width="1.300"/></svg></span>
<i class="tsep"></i>
<span class="app2"><svg viewBox="0 0 22 22"><path d="M3 11C3 3 19 1 20 13H7c0 5 8 6 12 3v4c-7 3-16 0-16-9zM7 10h8c-1-4-7-4-8 0z" fill="#1879d6"/></svg></span>
<span class="app2"><svg viewBox="0 0 22 22"><path d="M3 6h16v16H3z" fill="#fff"/><path d="M7 6c0-6 8-6 8 0" fill="none" stroke="#fff" stroke-width="1.500"/><path d="M7 9h4v4H7z" fill="#f25022"/><path d="M11.500 9h4v4h-4z" fill="#7fba00"/><path d="M7 13.500h4v4H7z" fill="#00a4ef"/><path d="M11.500 13.500h4v4h-4z" fill="#ffb900"/></svg></span>
<span class="app2"><svg viewBox="0 0 22 22"><path d="M1 3h8l2 3h10v14H1z" fill="#f3cf6a"/><path d="M6 11l5-4 5 4v7H6z" fill="#4aa8e8"/></svg></span>
<span class="app2"><svg viewBox="0 0 24 24"><circle cx="12" cy="13" r="9" fill="#1a8fe0"/><path d="M7 13h10c0-6-10-6-10 0 0 6 8 6 10 2" fill="none" stroke="#fff" stroke-width="2.500"/><path d="M2 22C-1 18 14 4 22 2c2 2-1 8-4 10" fill="none" stroke="#f0c030" stroke-width="1.300"/></svg></span>
<span class="app2 run"><svg viewBox="0 0 24 24"><path d="M13 1c4-1 8 1 9 2-3 0-5 1-6 3 4 0 6 3 6 8 0 6-4 9-10 9S2 19 2 13 6 2 13 1zm-1 10c-2 0-3 1-3 3s1 3 3 3 3-1 3-3z" fill="#1187e6"/></svg></span>
<span class="app2 run"><svg viewBox="0 0 24 24"><circle cx="12" cy="13" r="10" fill="#7ec544" stroke="#3c8a2a"/><circle cx="12" cy="13" r="7" fill="#e6f6d4"/><path d="M6 13h12M9 9h6M9 17h6" stroke="#3c9a2a" stroke-width="2"/></svg></span>
<span class="app2 run"><svg viewBox="0 0 24 24"><rect x="1" y="1" width="22" height="22" rx="3" fill="#125fa8"/><path d="M4 8h7v11H4zM13 8h7v11h-7z" fill="#e8f2fb"/><circle cx="15" cy="7" r="4" fill="#8cc4ee"/></svg></span>
<span class="app2 act"><svg viewBox="0 0 20 20"><use href="#anchor"/></svg></span>
<span class="app2 run"><svg viewBox="0 0 24 24"><rect x="1" y="1" width="22" height="22" rx="2" fill="#f0a91e"/><path d="M5 6h12v14H5z" fill="#fdf1c8" transform="rotate(-8 11 13)"/><path d="M9 10h6M8 13h6M8 16h6" stroke="#b08a3a"/><path d="M22 2L14 16" stroke="#c8321e" stroke-width="2.500"/></svg></span>
<span class="cpu">20%<br>CPU使用</span>
<span class="tray w20"><svg viewBox="0 0 12 8"><path d="M1 7l5-5 5 5" fill="none" stroke="#fff" stroke-width="1.200"/></svg></span>
<span class="tray w26"><svg class="tall" viewBox="0 0 16 20"><rect width="16" height="20" fill="#c8402e"/><path d="M0 5l8 5 8-5" fill="none" stroke="#9c2a1e"/><circle cx="8" cy="9" r="2" fill="#e8b050"/></svg></span>
<span class="tray"><svg viewBox="0 0 18 14"><path d="M3 4h13v8H3zM5 1v3M9 1v3" fill="none" stroke="#fff"/><path d="M3 4h9v8H3z" fill="#fff"/></svg></span>
<span class="tray"><svg viewBox="0 0 16 16"><path d="M1 15C1 8 8 1 15 1M5 15c0-5 5-10 10-10M9 15c0-3 3-6 6-6" fill="none" stroke="#ccc" stroke-dasharray="2 1"/></svg></span>
<span class="tray w20"><svg viewBox="0 0 16 16"><path d="M1 5h3l4-4v14l-4-4H1z" fill="none" stroke="#fff"/><path d="M11 5c1 2 1 4 0 6" fill="none" stroke="#fff"/></svg></span>
<span class="tray kb"><svg viewBox="0 0 24 16"><rect x=".5" y=".5" width="23" height="15" fill="none" stroke="#fff"/><path d="M3 4h18M3 7h18M6 11h12" stroke="#fff" stroke-dasharray="1 1"/></svg></span>
<span class="ime2">中</span>
<span class="tray w40"><svg viewBox="0 0 28 28"><use href="#slogo"/></svg></span>
<span class="clock">8:22<br>2017/10/29</span>
<span class="notif"><svg viewBox="0 0 16 16"><path d="M1 1h14v11H9l-3 3v-3H1z" fill="#fff"/><path d="M3 4h10M3 7h10M3 10h8" stroke="#333"/></svg><b>2</b></span>
</div>

<div class="badge">72</div>

<div class="ime">
<svg class="slogo" viewBox="0 0 28 28"><use href="#slogo"/></svg>
<div class="imebar"><span class="zh">中</span><span class="pt">°,</span>
<svg viewBox="0 0 14 18"><rect x="4" y="1" width="6" height="11" rx="3" fill="#1273c4"/><path d="M1 9c0 7 12 7 12 0M7 14v3M3 17h8" fill="none" stroke="#1273c4" stroke-width="1.500"/></svg>
<svg viewBox="0 0 18 14"><rect x=".5" y=".5" width="17" height="13" rx="2" fill="#e6f2fb" stroke="#1273c4"/><path d="M3 4h12M3 7h12M5 10h8" stroke="#1273c4" stroke-dasharray="1.500 1"/></svg>
<svg viewBox="0 0 18 16"><circle cx="6" cy="4" r="3" fill="#a9bccc"/><path d="M1 15c0-5 10-5 10 0z" fill="#a9bccc"/><rect x="8" y="8" width="9" height="7" fill="#fff" stroke="#a9bccc"/></svg>
<svg viewBox="0 0 18 16"><path d="M5 1l4 2 4-2 5 4-3 3-1-1v9H4V7L3 8 0 5z" fill="#1273c4"/></svg>
<svg viewBox="0 0 16 16"><path d="M15 3l-3 3-2-2 3-3c-3-1-6 1-5 5L1 13l2 2 7-7c4 1 6-2 5-5z" fill="#1273c4"/></svg>
</div>
</div>

<section class="dialog">
<div class="dtitle">参数图</div>
<div class="dinner">
<div class="radios"><label class="r1"><b class="radio on"></b>角度放坡形式</label><label class="r2"><b class="radio"></b>底宽放坡形式</label></div>
<svg class="cad" viewBox="562 264 737 374">
<g fill="none" stroke="#fff" stroke-width="1">
<path d="M649.500 343.500h278v160h-278z"/>
<circle cx="710" cy="419.500" r="27.500"/><circle cx="868" cy="419.500" r="27.500"/>
<path d="M761.500 394.500h50v46h-50z"/>
<path d="M762 405l10-10M762 424l22-29M767 440l31-45M784 440l27-35M797 440l14-18M800.500 300v38M800.500 529v38M599 451.500h29M929 451.500h30M634.500 341v68M634.500 437v68M629 343.500h11M629 503.500h11M649 518.500h131M807 518.500h121M649.500 512v12M927.500 512v12"/>
<path d="M632 341l5 5M632 501l5 5M646 521l6-6M925 521l6-6"/>
<path d="M1009.500 335.500h227v96h-227zM1103.500 417v86M1134.500 417v86M1103.500 416.500h31M1093 503.500h22l3-3 2 8 2-5h19"/>
<path d="M1081 319.500h-23.500v25M1084 378.500h-17.500v37M997.500 335v96M992 335.500h11M992 431.500h11"/>
<path d="M1202 320.500h-42l-9 20M1171 321l-8 19M1182 321l-8 19M1193 321l-8 19M1184 403.500h-34l-10 7M1161 403l-9 7M1172 403l-10 7M1183 403l-10 7"/>
<path d="M1245.500 339v31M1240 339.500h11M1240 370.500h11M1243.500 384v31M1238 384.500h11M1238 414.500h11M1151.500 417v15M1146 417.500h11M1146 431.500h11M1219 374l10 11M1219 385l10 7M1219 393l10 7M1219 374v20"/>
<path d="M1081 601.500h59"/>
</g>
<g fill="none" stroke="#f00" stroke-width="2"><path d="M1014 367v-28h216v28M1014 383v30h216v-30M1014 490v30h216v-30"/></g>
<g fill="none" stroke="#ff0"><path d="M1016 340.500h212M1016 410.500h212" stroke-dasharray="3 8"/><path d="M1016 340.500h212M1016 410.500h212" stroke-width="3" stroke-dasharray="1 10" stroke-dashoffset="-1"/></g>
<path d="M1229 383.500v2M1229 391v2M1229 399v2" stroke="#f0f" stroke-width="2"/>
<g class="big2"><text x="780" y="334">2</text><text x="780" y="563">2</text><text x="613" y="449">1</text><text x="944" y="449">1</text><text x="1114" y="597" class="sp">1-1</text></g>
<g class="big"><text x="698" y="595">矩形承台</text><text x="1056" y="560">均不翻起二</text></g>
<g class="wt"><text x="1022" y="316">横向面筋</text><text x="1152" y="318">纵向面筋</text><text x="1046" y="374">横向底筋</text><text x="1130" y="401">纵向底筋</text><text x="1206" y="386" transform="rotate(-90 1206 386)">侧面筋</text></g>
<g class="gn"><text x="1073" y="315">XMJ</text><text x="1204" y="317">YMJ</text><text x="1097" y="374">C12@200</text><text x="1180" y="401">C12@200</text>
<text x="1218" y="390" transform="rotate(-90 1218 390)">C12@200</text><text x="780" y="523">1500</text><text x="639" y="436" transform="rotate(-90 639 436)">1500</text><text x="993" y="392" transform="rotate(-90 993 392)">500</text><text x="1259" y="358" transform="rotate(-90 1259 358)">0</text><text x="1259" y="412" transform="rotate(-90 1259 412)">10*d</text><text x="1166" y="433" transform="rotate(-90 1166 433)">100</text></g>
</svg>
<div class="dfoot"><span class="dbtn">配筋形式</span></div>
</div>
</section>
</div>
</body></html>
```
FILE: styles.css
```css
*{box-sizing:border-box}
html,body{margin:0;padding:0;width:1366px;height:768px;overflow:hidden}
body{font:12px/16px "Noto Sans CJK SC","Liberation Sans",sans-serif;color:#111;background:#f0f0f0}
i{font-style:normal}
b{font-weight:normal}
svg{display:block;flex:none}
.defs{position:absolute;width:0;height:0}
.app{position:relative;display:flex;flex-direction:column;width:1366px;height:768px}

.titlebar{height:24px;background:#fff;display:flex;align-items:center;padding-left:3px}
.appicon{width:15px;height:15px}
.title{margin-left:5px;flex:1;white-space:nowrap;letter-spacing:.33px}
.winbtn{width:46px;height:24px;display:flex;align-items:center;justify-content:center}
.winbtn svg{width:12px;height:12px}

.menubar{height:30px;display:flex;align-items:center;padding:0 0 4px 7px;gap:10px;background:#f0f0f0;white-space:nowrap}
.mtight{margin-left:-1px}
.mfix{margin-right:3px}
.mone{margin-right:1px}
.mbim{margin-right:5px}
.mnew{margin-left:-4px}
.tool{display:flex;align-items:center;gap:4px}
.tool.tight{margin-left:-3px}
.tool .dd{margin-left:4px}
.i16{width:16px;height:16px}
.i12{width:12px;height:12px}
.dd{width:5px;height:3px}
.more{width:9px;height:9px;margin-left:auto;margin-right:3px;align-self:flex-start;margin-top:3px}
.news{width:187px;height:30px;margin:0 0 -4px -3px;background:#fbfbfb;color:#006a6a;display:flex;align-items:center;padding-left:29px;border-radius:3px 3px 0 0}
.user{margin-left:-4px}
.beans{margin-left:2px;gap:9px}

.toolbar{height:30px;display:flex;align-items:center;background:linear-gradient(#f8f8f8,#ededed);white-space:nowrap;padding:0 0 4px 5px;border-top:1px solid #fff}
.m6{margin-right:6px}
.m8{margin-right:8px}
.undo{margin-left:1px}
.toolbar>.dd{margin-right:8px}
.sep{width:1px;height:22px;background:#bbb;margin:0 5px;flex:none}
.toolbar>.gap{margin:0 10px;align-self:center;width:8px;height:8px}
.tbi{display:flex;align-items:center;gap:4px;margin-left:7px}
.tbi .dd{margin:0 0 0 3px}
.tbi.first{margin-left:0}
.tbi.off{color:#8c8c8c}
.tbi.m0{margin-left:0}
.tbi.m1{margin-left:1px}
.tbi.m2{margin-left:2px;gap:1px}
.tbi.m3{margin-left:3px}
.tbi.m4{margin-left:4px}
.tbi.m6b{margin-left:5px;gap:3px}
.tbi.m9{margin-left:9px}
.tbi.snug{gap:1px;margin-right:3px}
.sigma{font:bold 14px "Liberation Serif",serif;width:13px;text-align:center;color:#111}
.combo{width:62px;height:23px;border:1px solid #888;background:linear-gradient(90deg,#fff 80%,#eee 80%);display:flex;align-items:center;justify-content:flex-end;padding-right:4px;margin-left:130px}

.main{flex:1;display:flex;min-height:0}
.nav{width:165px;display:flex;flex-direction:column;padding-bottom:1px}
.navhead{height:16px;background:#0066cc;color:#fff;display:flex;align-items:center;font-size:13px}
.navhead span{flex:1}
.pin{width:10px;height:10px;margin-right:8px}
.navbtn{height:22px;flex:none;border:1px solid #b8b8b8;background:#f0f0f0;text-align:center;line-height:20px;font-size:12px}
.navtools{height:28px;display:flex;gap:7px;align-items:center;padding:3px 0 0 7px;background:linear-gradient(#fafafa,#eee)}
.navtools svg{width:16px;height:14px}
.pane{display:flex;background:#fff;border:1px solid #a0a0a0;min-height:0;overflow:hidden}
.navtree{flex:1;margin-left:2px}
.navtree .list{padding-top:1px}
.navbtn.btm{margin-top:1px}
.list{flex:1;overflow:hidden;min-width:0}
.sbar{width:16px;background:#f0f0f0;display:flex;flex-direction:column;align-items:center;flex:none}
.sbtn{width:10px;height:10px;margin:4px 0;flex:none}
.thumb{background:#cdcdcd;width:15px;flex:none}
.nsb{margin-right:2px}
.nsb .thumb{height:436px;margin-bottom:auto}
.csb{margin-right:2px}
.csb .thumb{height:161px;margin-top:71px;margin-bottom:auto}

.row{display:flex;align-items:center;height:16px;white-space:nowrap;background-repeat:no-repeat}
.chev{width:10px;height:10px}
.lat{font:10px/16px "DejaVu Sans Mono","Liberation Mono",monospace}
.lat i{font:12px/16px "Noto Sans CJK SC",sans-serif}
.lb{margin-left:5px}
.ico{width:15px;height:15px;margin-right:5px}
.fold{width:16px;height:14px;margin-left:7px}
.grp{padding-left:6px;background-image:repeating-linear-gradient(90deg,#888 0 1px,transparent 1px 2px);background-size:4px 1px;background-position:19px 8px}
.kid{padding-left:43px;
  background-image:repeating-linear-gradient(#888 0 1px,transparent 1px 2px),repeating-linear-gradient(#888 0 1px,transparent 1px 2px),repeating-linear-gradient(90deg,#888 0 1px,transparent 1px 2px);
  background-size:1px 16px,1px 16px,12px 1px;background-position:12px 0,31px 0,31px 8px}
.kid.end{background-size:1px 16px,1px 9px,12px 1px}
.hot{
  background-image:repeating-linear-gradient(#888 0 1px,transparent 1px 2px),repeating-linear-gradient(#888 0 1px,transparent 1px 2px),repeating-linear-gradient(90deg,#888 0 1px,transparent 1px 2px),linear-gradient(#dcdcdc,#dcdcdc);
  background-size:1px 16px,1px 16px,12px 1px,81px 16px;background-position:12px 0,31px 0,31px 8px,40px 0}

.content{flex:1;display:flex;flex-direction:column;min-width:0}
.toolbar2{height:28px;margin-left:5px;padding-bottom:2px;display:flex;align-items:center;background:linear-gradient(#f9f9f9,#eaeaea);white-space:nowrap;border-radius:3px 0 0 0}
.toolbar2 .sep{margin:0 4px;height:20px}
.toolbar2 .sw{margin-left:8px}
.toolbar2 .tbi .dd{margin-left:-1px}
.toolbar2 .tbi{margin-left:8px}
.toolbar2 .tbi.m0{margin-left:0}
.toolbar2 .tbi.m1{margin-left:1px}
.toolbar2 .tbi.m3{margin-left:3px}
.toolbar2 .tbi.m9{margin-left:9px;gap:5px}
.toolbar2 .tbi.s175{margin-left:5px}
.floor{width:63px;height:22px;background:#fff;margin-left:6px;padding:0 3px 0 2px;display:flex;align-items:center;justify-content:space-between}
.toolbar2 .wide{gap:5px}
.toolbar2 .wide:not(.m3){margin-left:10px}
.body{flex:1;display:flex;min-height:0;background:#fff}
.left{width:189px;padding-left:7px;display:flex;flex-direction:column;background:#f0f0f0}
.search{height:31px;display:flex;align-items:flex-start;padding-top:5px;gap:2px}
.sinput{width:156px;height:24px;background:#fff;border:1px solid #a0a0a0;color:#777;padding:2px 0 0 3px}
.sbutton{width:24px;height:24px;background:#fff;display:flex;align-items:center;justify-content:center}
.sbutton svg{width:14px;height:14px}
.comptree{flex:1;width:182px}
.leaf{padding-left:41px;background-image:repeating-linear-gradient(#888 0 1px,transparent 1px 2px),repeating-linear-gradient(90deg,#888 0 1px,transparent 1px 2px);background-size:1px 16px,11px 1px;background-position:29px 0,29px 8px}
.par{padding-left:24px;background-image:repeating-linear-gradient(90deg,#888 0 1px,transparent 1px 2px);background-size:4px 1px;background-position:36px 8px}
.par .cti{margin-left:7px}
.leaf .lat,.par .lat{padding-top:2px}
.cti{width:13px;height:13px;margin-right:7px}
.sub{padding-left:60px;background-image:repeating-linear-gradient(#888 0 1px,transparent 1px 2px),repeating-linear-gradient(#888 0 1px,transparent 1px 2px),repeating-linear-gradient(90deg,#888 0 1px,transparent 1px 2px);background-size:1px 16px,1px 9px,11px 1px;background-position:29px 0,48px 0,48px 8px}
.sel{background-image:repeating-linear-gradient(#888 0 1px,transparent 1px 2px),repeating-linear-gradient(#888 0 1px,transparent 1px 2px),repeating-linear-gradient(90deg,#888 0 1px,transparent 1px 2px),linear-gradient(#cde5f8,#cde5f8);background-size:1px 16px,1px 9px,11px 1px,93px 16px;background-position:29px 0,48px 0,48px 8px,58px 0}
.sel .lat{background:#1c6fcf;color:#fff;margin-left:-2px;padding:0 2px;width:70px;height:16px}
.sel .lat i{color:#fff}

.right{flex:1;min-width:0;display:flex;flex-direction:column;padding:0 4px 0 8px;background:#fff;border-top:1px solid #eee}
.tabs{height:21px;border-bottom:1px solid #cfcfcf;flex:none}
.tab{display:inline-block;height:20px;width:60px;border:1px solid #dcdcdc;border-width:0 1px 0 0;text-align:center;line-height:18px;background:#fff}
.props{flex:1;margin-top:2px;margin-bottom:4px;border:1px solid #bdbdbd;padding:1px}
.grid{display:grid;grid-template-columns:21px 190px 127px 31px;grid-template-rows:23px;grid-auto-rows:19px;width:369px}
.grid>div{border-right:1px solid #c4c4c4;border-bottom:1px solid #c4c4c4;display:flex;align-items:center;white-space:nowrap}
.grid>.hd{justify-content:center;background:linear-gradient(#fafafa,#ececec)}
.grid>.hd.val{background:linear-gradient(#fbdfa8,#f3bf68);color:#7a0a6a}
.grid .no{justify-content:center;background:linear-gradient(90deg,#fff,#e6e6e6);font:10px "DejaVu Sans Mono",monospace}
.grid>.no.on{background:#fbd28b;color:#8a1a6a}
.grid .nm{padding-left:20px}
.link{color:#00c}
.dim,.dim i{color:#808080}
.grid>.nm.on{background:#0078d7;color:#fff}
.grid>.vl.on{background:#d5e8f8}
.grid .vl{padding-left:2px}
.grid .ex{justify-content:center}
.chk{width:13px;height:13px;border:1px solid #333;background:#fff}
.grid .plus{padding-left:2px}
.pb{width:13px;height:13px;border:1px solid #aaa;margin-right:5px;font:12px/10px "Liberation Sans",sans-serif;text-align:center;color:#111}

.status{height:22px;display:flex;gap:3px;background:#f0f0f0;padding-top:1px}
.status span{border:1px solid #dadada;height:20px;padding-left:1px;white-space:nowrap;display:block}
.s1{width:147px}.s2{width:78px}.s3{width:97px}.s4{width:47px}.s5{flex:1}.s6{width:69px}

.taskbar{height:40px;background:#02090f;display:flex;align-items:center;color:#fff;flex:none}
.start{width:48px;height:40px;background:#000;display:flex;align-items:center;justify-content:center;flex:none}
.start svg{width:16px;height:16px}
.cortana{width:344px;height:40px;background:#333;display:flex;align-items:center;padding-left:9px;flex:none}
.cring{width:21px;height:21px;border:3px solid #e6e6e6;border-radius:50%;flex:none}
.ph{color:#9a9a9a;margin-left:6px;flex:1;font-size:14px}
.mic{width:12px;height:18px;margin-right:14px}
.slot{width:50px;display:flex;justify-content:center;flex:none}
.slot svg{width:20px;height:20px}
.tsep{width:1px;height:16px;background:#444;margin:0 16px 0 7px;flex:none}
.app2{width:42.3px;height:40px;display:flex;align-items:center;justify-content:center;flex:none}
.app2 svg{width:24px;height:24px}
.app2.run{background:linear-gradient(#76b9ed,#76b9ed) center bottom/33px 2px no-repeat}
.app2.act{background:linear-gradient(#76b9ed,#76b9ed) center bottom/40px 2px no-repeat #33383c}
.cpu{width:80px;margin-left:5px;text-align:center;line-height:17px;flex:none}
.tray{width:24px;display:flex;justify-content:center;flex:none}
.tray svg{width:16px;height:16px}
.tray svg.tall{height:20px}
.tray.w20{width:20px}
.tray.w26{width:26px}
.tray.w40{width:40px}
.tray.kb{width:38px}
.tray.kb svg{width:23px}
.ime2{width:18px;text-align:center;font-size:14px;flex:none}
.clock{width:68px;text-align:center;line-height:17px;white-space:nowrap;flex:none;letter-spacing:.2px}
.notif{position:relative;margin-left:auto;width:62px;display:flex;justify-content:center}
.notif svg{width:16px;height:16px}
.notif b{position:absolute;left:33px;top:5px;width:15px;height:15px;border-radius:50%;background:#333;border:1px solid #ddd;font-size:11px;line-height:13px;text-align:center;font-weight:bold}

.badge{position:absolute;left:1139px;top:-29px;width:48px;height:48px;border-radius:50%;background:#2fb24c;border:2px solid #d8d8d8;color:#fff;font:bold 11px "Liberation Sans",sans-serif;display:flex;align-items:flex-end;justify-content:center;padding-bottom:6px;box-shadow:0 1px 3px #888}

.ime{position:absolute;left:572px;top:60px;display:flex;align-items:center}
.slogo{width:28px;height:28px;position:relative;z-index:1}
.imebar{height:24px;width:155px;background:#f4f9fd;border:1px solid #e0e8f0;display:flex;align-items:center;gap:6px;padding-left:3px;margin-left:-1px}
.imebar svg{width:15px;height:16px}
.zh{color:#1273c4;font-size:15px;font-weight:bold;width:16px}
.pt{color:#1273c4;font-weight:bold;font-size:13px;width:17px}

.dialog{position:absolute;left:554px;top:199px;width:753px;height:492px;border:1px solid #555;background:linear-gradient(#b9c9dc,#dbe6f3 12%);padding:0 7px 8px 7px;display:flex;flex-direction:column}
.dtitle{height:30px;color:#9a9a9a;line-height:37px;flex:none}
.dinner{flex:1;display:flex;flex-direction:column;background:#efefef;border:1px solid #aaa;min-height:0}
.radios{height:33px;border-bottom:1px solid #aaa;display:flex;align-items:center;flex:none;padding-left:113px}
.radios label{display:flex;align-items:center;gap:3px}
.r2{margin-left:214px}
.radio{width:12px;height:12px;border:1px solid #555;border-radius:50%;background:#fff;display:block}
.radio.on{background:radial-gradient(#333 0 3px,#fff 3.5px)}
.cad{width:737px;height:374px;margin:0 -1px;background:#000;flex:none}
.cad text{font:11px "Liberation Sans",sans-serif}
.cad .wt text{fill:#fff;font:12.5px "Noto Sans CJK SC",sans-serif}
.cad .big text{fill:#fff;font:300 31px "Noto Sans CJK SC",sans-serif}
.cad .big2 text{fill:#fff;font:30px "Liberation Serif",serif;text-anchor:middle}
.cad .big2 .sp{letter-spacing:4px}
.cad .gn text{fill:#0f0;font:11.5px "Liberation Mono",monospace}
.dfoot{flex:1;display:flex;justify-content:flex-end;align-items:flex-start;padding:11px 25px 0 0}
.dbtn{width:73px;height:24px;border:1px solid #aaa;background:#e6e6e6;text-align:center;line-height:22px}
```
